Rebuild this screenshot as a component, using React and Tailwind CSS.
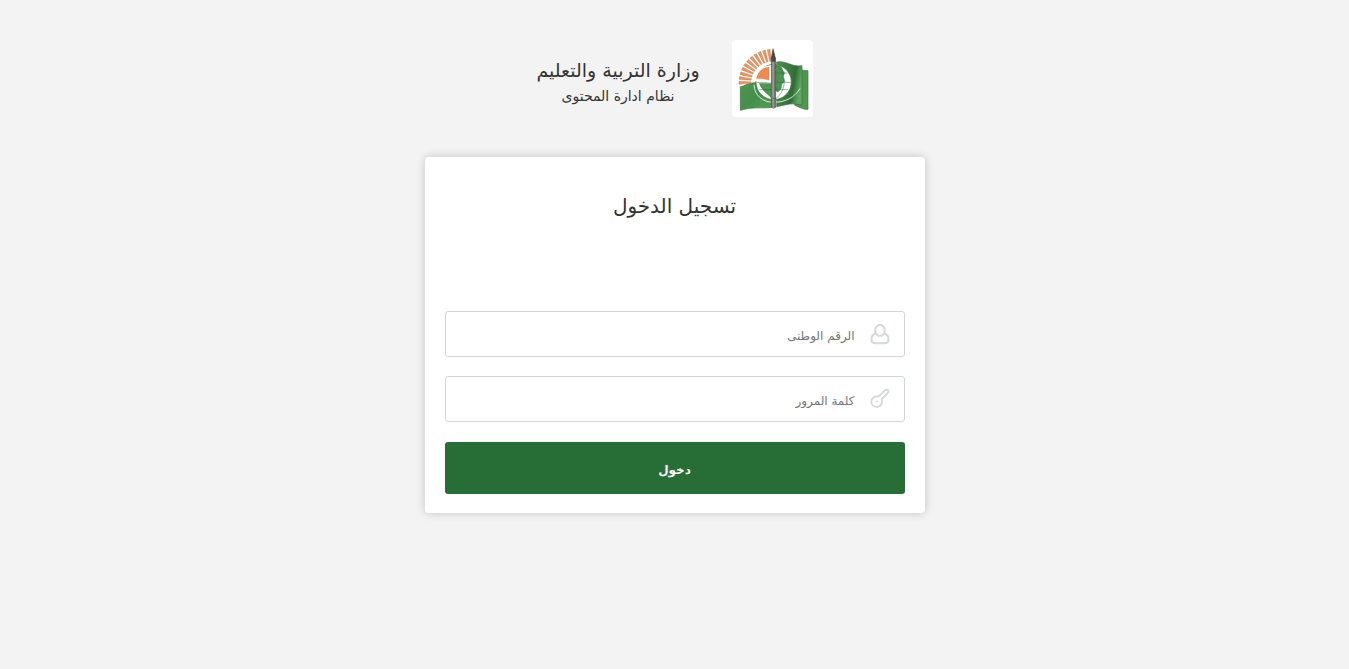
import React from 'react';

const rays = Array.from({ length: 11 }, (_, i) => i * 8.3);

function MinistryLogo() {
  return (
    <svg
      viewBox="12 12 243 231"
      className="h-[77px] w-[81px] shrink-0 rounded bg-white"
      role="img"
      aria-label="وزارة التربية والتعليم"
    >
      <defs>
        <linearGradient id="flag" x1="0" y1="0" x2="1" y2="1">
          <stop offset="0" stopColor="#4d9650" />
          <stop offset="0.5" stopColor="#468f4a" />
          <stop offset="1" stopColor="#55a257" />
        </linearGradient>
        <linearGradient id="fold" x1="0" y1="0" x2="1" y2="0.3">
          <stop offset="0" stopColor="#4a924c" />
          <stop offset="0.5" stopColor="#3a7c40" />
          <stop offset="0.75" stopColor="#2f6c36" />
          <stop offset="1" stopColor="#5fa861" />
        </linearGradient>
        <linearGradient id="pen" x1="0" y1="0" x2="1" y2="0">
          <stop offset="0" stopColor="#555753" />
          <stop offset="0.4" stopColor="#a6a8a4" />
          <stop offset="1" stopColor="#4b4e4b" />
        </linearGradient>
      </defs>
      <path d="M210 101L240 104V220C225 222 212 212 200 208Z" fill="#4f9751" stroke="#3a733f" strokeWidth="2" />
      <path d="M146 78C175 73 190 94 222 89V208C207 203 190 202 174 206L146 212Z" fill="url(#fold)" stroke="#3a733f" strokeWidth="2" />
      <path d="M37 151C59 144 74 139 92 140L134 151V213C107 219 79 211 37 223Z" fill="url(#flag)" stroke="#3b733e" strokeWidth="2" />
      <path d="M78 146C79 178 104 199 137 199C172 199 200 184 216 158" fill="none" stroke="#dcebd8" strokeWidth="3" />
      <circle cx="137" cy="138" r="53" fill="#fff" stroke="#3b733e" strokeWidth="2" />
      <path d="M93 142H130V187C121 174 101 166 93 142Z" fill="#4b9650" />
      <path d="M143 88C156 86 162 92 164 101L170 112L165 121L170 136L162 144L160 157L150 169L143 164Z" fill="#4b9650" stroke="#3a733f" strokeWidth="1" />
      <path d="M94 161H181M87 139H189M143 111H179M143 86C177 108 177 165 143 188" fill="none" stroke="#3f5c44" strokeWidth="1.5" />
      <path d="M36 148C53 143 67 132 90 131C106 129 121 139 134 137" fill="none" stroke="#fff" strokeWidth="7" />
      <path d="M83 129C87 106 101 92 125 91V134C111 132 97 129 83 129Z" fill="#ef8b50" stroke="#fff" strokeWidth="4" />
      <path d="M86 128C91 106 104 96 123 94V132C110 130 98 127 86 128Z" fill="none" stroke="#c4713f" strokeWidth="1" />
      {rays.map((angle) => (
        <path
          key={angle}
          d="M33 136L69 137.5V142L33 145Z"
          fill="#ec955f"
          stroke="#b0714a"
          strokeWidth="1"
          transform={`rotate(${angle} 134 141)`}
        />
      ))}
      <path d="M135 38L143 69V214Q136 220 130 214V69Z" fill="url(#pen)" stroke="#4c504c" strokeWidth="1.5" />
      <path d="M135 38L143 68L140 76H132L129 68Z" fill="#464b47" />
      <path d="M130 76H143M130 187H143" stroke="#454945" strokeWidth="1.5" />
    </svg>
  );
}

function UserIcon() {
  return (
    <svg viewBox="0 0 20 22" className="h-[22px] w-5 shrink-0" fill="none" stroke="#d3d8d8" strokeWidth="2" aria-hidden="true">
      <ellipse cx="10" cy="7.4" rx="4.7" ry="5.5" />
      <path d="M6 10.3C3.3 11.2 1.5 13.5 1.5 16.5C1.5 19.2 3 20.2 5.5 20.2H14.5C17 20.2 18.5 19.2 18.5 16.5C18.5 13.5 16.7 11.2 14 10.3" />
    </svg>
  );
}

function KeyIcon() {
  return (
    <svg viewBox="0 0 20 22" className="h-[22px] w-5 shrink-0" fill="none" stroke="#d3d8d8" strokeWidth="1.8" strokeLinejoin="round" aria-hidden="true">
      <path d="M8.4 8.7L15 2.3C16.1 1.3 18.4 1.5 18.5 3.1C18.5 4.1 18 4.8 17.3 5.5L11.7 11.2C13.3 15 10.6 19 6.8 19C3.7 19 1.3 16.7 1.3 13.7C1.3 10.2 4.7 7.5 8.4 8.7Z" />
      <circle cx="6.8" cy="13.6" r="1.1" fill="#d3d8d8" stroke="none" />
    </svg>
  );
}

function Field({ id, label, type, icon }) {
  return (
    <div className="flex h-[46px] items-center gap-[15px] rounded-[3px] border border-[#d3d6d6] bg-white px-[14px] focus-within:border-[#276e36]">
      <label htmlFor={id} aria-label={label}>{icon}</label>
      <input
        id={id}
        type={type}
        placeholder={label}
        className="h-full min-w-0 flex-1 bg-transparent pt-[3px] text-[12px] text-[#333] outline-none placeholder:text-[#757575]"
      />
    </div>
  );
}

export default function App() {
  return (
    <div
      dir="rtl"
      lang="ar"
      className="flex min-h-screen flex-col items-center gap-10 bg-[#f3f3f3] py-10 font-['DejaVu_Sans',sans-serif] text-[#333]"
    >
      <header className="flex items-start justify-center gap-8">
        <MinistryLogo />
        <div className="flex flex-col items-center pt-4 whitespace-nowrap">
          <h1 className="text-[19px] leading-7">وزارة التربية والتعليم</h1>
          <p className="text-[14px] leading-6">نظام ادارة المحتوى</p>
        </div>
      </header>
      <main className="w-full max-w-[500px] rounded bg-white px-5 pt-8 pb-[19px] shadow-[0_0_10px_rgba(0,0,0,0.2)]">
        <h2 className="text-center text-[20px] leading-[34px]">تسجيل الدخول</h2>
        <form className="mt-[88px]" onSubmit={(e) => e.preventDefault()}>
          <div className="flex flex-col gap-[19px]">
            <Field id="national-id" label="الرقم الوطنى" type="text" icon={<UserIcon />} />
            <Field id="password" label="كلمة المرور" type="password" icon={<KeyIcon />} />
          </div>
          <button type="submit" className="mt-5 h-[52px] w-full rounded-[3px] bg-[#276e36] pt-[3px] text-[12px] font-bold text-white">
            دخول
          </button>
        </form>
      </main>
    </div>
  );
}
